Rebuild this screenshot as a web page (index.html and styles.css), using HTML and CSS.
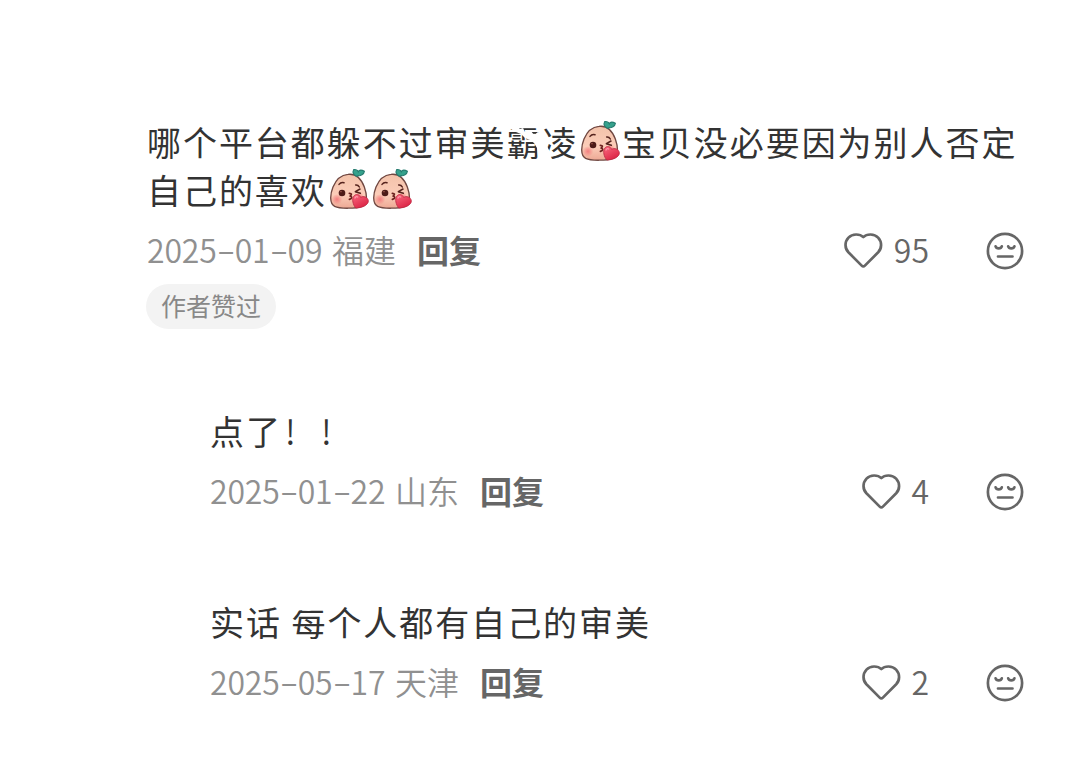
FILE: index.html
```html
<!DOCTYPE html>
<html lang="zh-CN">
<head>
<meta charset="utf-8">
<title>评论</title>
<link rel="stylesheet" href="styles.css">
</head>
<body>
<svg class="defs" aria-hidden="true">
  <defs>
    <linearGradient id="skin" x1="0.5" y1="0" x2="0.5" y2="1">
      <stop offset="0" stop-color="#f3c2aa"/><stop offset="0.6" stop-color="#fbcdb9"/><stop offset="1" stop-color="#eda894"/>
    </linearGradient>
    <radialGradient id="blush"><stop offset="0" stop-color="#f47f80"/><stop offset="1" stop-color="#f47f80" stop-opacity="0"/></radialGradient>
    <linearGradient id="love" x1="0" y1="0" x2="0.6" y2="1">
      <stop offset="0" stop-color="#fa6b80"/><stop offset="1" stop-color="#dc2445"/>
    </linearGradient>
    <symbol id="kiss" viewBox="0 0 120 129">
      <path d="M54 19C78 16 94 33 103 57C111 80 113 105 96 115C79 122 29 123 14 115C-3 105 1 77 9 57C18 35 32 21 54 19Z" fill="url(#skin)" stroke="#704842" stroke-width="4"/>
      <path d="M80 25C70 21 67 12 71 5C77 3 83 7 85 11C88 5 95 5 103 10C102 19 91 24 85 23Z" fill="#35a18c" stroke="#267c70" stroke-width="3.5"/>
      <circle cx="21" cy="94" r="16" fill="url(#blush)"/>
      <circle cx="89" cy="85" r="12" fill="url(#blush)"/>
      <circle cx="36" cy="75" r="10" fill="#4d1b18"/>
      <circle cx="33" cy="71" r="2" fill="#b96a5d"/>
      <path d="M27 49Q33 41 42 44M77 51Q84 50 88 57M90 63L76 71L91 76" fill="none" stroke="#54231d" stroke-width="4.5" stroke-linecap="round" stroke-linejoin="round"/>
      <path d="M58 76Q69 77 61 84Q71 90 58 94" fill="none" stroke="#6b211f" stroke-width="5" stroke-linecap="round"/>
      <path d="M77 120C69 110 65 94 71 85C77 76 88 79 92 88C100 83 113 87 115 98C116 112 94 120 77 120Z" fill="url(#love)" stroke="#bd2942" stroke-width="2.5"/>
      <path d="M75 90Q78 84 83 87" fill="none" stroke="#ff9dac" stroke-width="4" stroke-linecap="round"/>
    </symbol>
    <symbol id="heart" viewBox="0 0 40 37">
      <path d="M20.3 5.1C17 1.9 9.6 1.2 5.5 5.6C1.4 10 1.7 16.4 5.4 20.3L18.7 33.6Q20.3 35.2 21.9 33.6L35.2 20.3C38.9 16.4 39.2 10 35.1 5.6C31 1.2 23.6 1.9 20.3 5.1Z" fill="none" stroke="#666" stroke-width="2.7" stroke-linejoin="round"/>
    </symbol>
    <symbol id="meh" viewBox="0 0 38 38">
      <g fill="none" stroke="#666" stroke-width="2.7" stroke-linecap="round">
        <circle cx="19" cy="19" r="17.1"/>
        <path d="M9.6 14.4C10.4 17 15 17 15.8 14.4M22.2 14.4C23 17 27.6 17 28.4 14.4M12 24.5H26.5"/>
      </g>
    </symbol>
  </defs>
</svg>
<main class="thread">
  <article class="comment">
    <p class="text">哪个平台都躲不过审美<span class="worn">霸<svg class="scuff" viewBox="0 0 54 36"><path d="M0 0H8L13 5L16 4L18 8L24 7L27 11L31 8L36 14L33 20L36 27L40 30V36H34L31 32L30 24L27 19L23 16L18 14L14 10L9 8L0 3Z" fill="#fff"/></svg></span><span class="worn">凌<svg class="scuff" viewBox="0 0 54 36"><path d="M0 12L7 16L5 22L8 28L9 36H0Z" fill="#fff"/></svg></span><svg class="emoji"><use href="#kiss"/></svg>宝贝没必要因为别人否定<br>自己的喜欢<svg class="emoji"><use href="#kiss"/></svg><svg class="emoji"><use href="#kiss"/></svg></p>
    <div class="meta">
      <span class="date">2025<i class="dash">-</i>01<i class="dash">-</i>09</span><span class="place">福建</span><b class="reply">回复</b>
      <span class="like"><svg class="heart"><use href="#heart"/></svg><span class="count">95</span></span>
      <svg class="meh"><use href="#meh"/></svg>
    </div>
    <span class="badge">作者赞过</span>
  </article>
  <article class="comment nested first">
    <p class="text">点了<span class="bang">!</span><span class="bang">!</span></p>
    <div class="meta">
      <span class="date">2025<i class="dash">-</i>01<i class="dash">-</i>22</span><span class="place">山东</span><b class="reply">回复</b>
      <span class="like"><svg class="heart"><use href="#heart"/></svg><span class="count">4</span></span>
      <svg class="meh"><use href="#meh"/></svg>
    </div>
  </article>
  <article class="comment nested second">
    <p class="text">实话 <span class="worn">每<svg class="scuff top" viewBox="0 0 36 10"><path d="M0 0H34V4Q24 4 18 7Q8 5 0 8Z" fill="#fff"/></svg></span>个人都有自己的审美</p>
    <div class="meta">
      <span class="date">2025<i class="dash">-</i>05<i class="dash">-</i>17</span><span class="place">天津</span><b class="reply">回复</b>
      <span class="like"><svg class="heart"><use href="#heart"/></svg><span class="count">2</span></span>
      <svg class="meh"><use href="#meh"/></svg>
    </div>
  </article>
</main>
</body>
</html>
```
FILE: styles.css
```css
* { box-sizing: border-box; }
body { margin: 0; background: #fff; font-family: "Noto Sans CJK SC", sans-serif; }
.defs { display: block; width: 0; height: 0; }
.thread { width: 1079px; height: 767px; padding: 118px 55px 0 147px; overflow: hidden; }
.text {
  margin: 0;
  color: #333;
  font-size: 34px;
  font-weight: 400;
  letter-spacing: 1.95px;
  line-height: 48px;
  white-space: nowrap;
}
.emoji { width: 40px; height: 43px; margin: 0 0.5px 0 3px; vertical-align: -7px; }
.emoji + .emoji { margin-left: 2.5px; }
.worn { position: relative; }
.scuff { position: absolute; left: 0; top: 7px; width: 54px; height: 36px; }
.scuff.top { width: 36px; height: 10px; }
.bang { display: inline-block; width: 36px; padding-left: 3px; font-weight: 350; }
.meta { display: flex; align-items: center; height: 48px; margin-top: 12.5px; color: #909090; }
.date, .place, .reply, .count { padding-bottom: 4px; font-size: 32px; line-height: 44px; }
.date { width: 185px; font-weight: 350; letter-spacing: -0.15px; }
.dash { display: inline-block; width: 18px; font-style: normal; text-align: center; transform: translateY(-1px) scaleX(1.7); }
.place { width: 85px; font-weight: 350; }
.reply { color: #666; font-weight: 700; }
.like { display: flex; align-items: center; gap: 10.5px; margin-left: auto; color: #666; }
.heart { width: 40px; height: 37px; }
.count { font-weight: 350; }
.meh { width: 38px; height: 38px; margin-left: 57px; }
.badge {
  display: block;
  width: 130px;
  height: 45px;
  margin: 9.5px 0 0 -1px;
  border-radius: 23px;
  background: #f3f3f3;
  color: #888;
  font-size: 25px;
  line-height: 43px;
  text-align: center;
}
.nested { padding-left: 63px; }
.first { margin-top: 78px; }
.second { margin-top: 82.5px; }
```
